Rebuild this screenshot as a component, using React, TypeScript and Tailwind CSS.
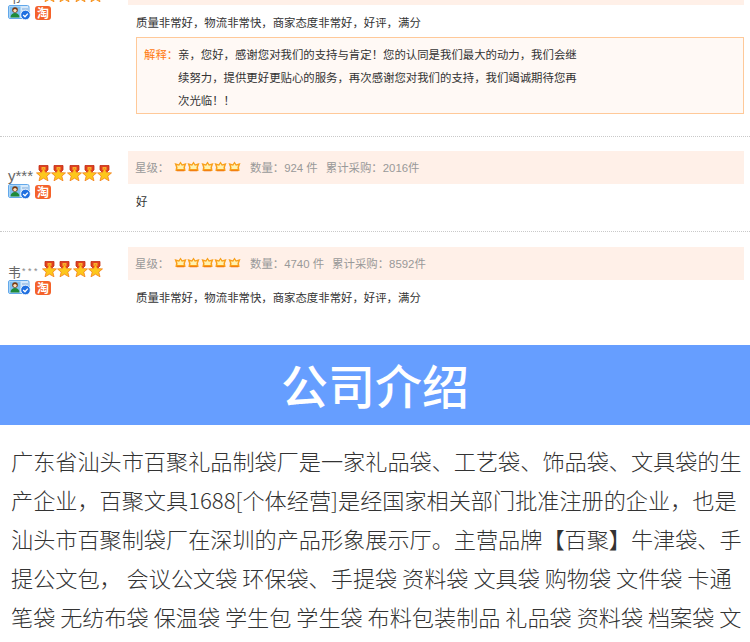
const cjk = "font-['Liberation_Sans','Noto_Sans_CJK_SC',sans-serif]";

function Medal() {
  return (
    <svg width="15" height="16" viewBox="0 0 15 16" className="shrink-0">
      <path d="M3 0.500h9v4.500l-2 2h-5l-2-2z" fill="#e0401f" stroke="#c22c12" strokeWidth="0.8" />
      <path d="M5.500 2h4v3h-4z" fill="#f7b02c" />
      <path
        d="M7.500 3.200l2 4.300 5 .4-3.700 3.200 1.200 4.700-4.500-2.600-4.500 2.600 1.200-4.700-3.700-3.200 5-.4z"
        fill="#fdc71c"
        stroke="#f4801a"
        strokeWidth="0.8"
        strokeLinejoin="round"
      />
    </svg>
  );
}

function Crown() {
  return (
    <svg width="13" height="11" viewBox="0 0 13 11" className="shrink-0">
      <path
        d="M6.500 .4l1.800 2.800 4.200-1.200-1.500 4.200.6 3.800h-10.200l.6-3.800-1.500-4.200 4.200 1.200z"
        fill="#f9a01b"
        strokeLinejoin="round"
      />
      <path d="M6.500 2.800l1.300 2 2.400-.6-.8 2.300.3 1.500h-6.400l.3-1.500-.8-2.300 2.400.6z" fill="#fff2b0" />
      <path d="M3 9.200h7l.4 1h-7.800z" fill="#f0760f" />
    </svg>
  );
}

function IdCard() {
  return (
    <svg width="23" height="15" viewBox="0 0 23 15" className="shrink-0">
      <rect x="0.500" y="0.500" width="20.500" height="13" rx="1.500" fill="#d5e9fb" stroke="#62a8ea" />
      <rect x="1.500" y="1.500" width="11" height="11" fill="#7fc0f2" />
      <circle cx="7" cy="5" r="2.800" fill="#7a3a12" />
      <circle cx="7" cy="5.600" r="1.700" fill="#fde0b8" />
      <path d="M2.500 12.500c0-3 2.200-4.500 4.500-4.500s4.500 1.500 4.500 4.500z" fill="#1f8a3a" />
      <path d="M14 4h6M14 6.500h5" stroke="#7fa9d8" />
      <circle cx="17.500" cy="10" r="4.800" fill="#1f6fe0" stroke="#fff" strokeWidth="0.800" />
      <path d="M15.200 10l1.800 1.800 2.800-3.200" fill="none" stroke="#fff" strokeWidth="1.300" />
    </svg>
  );
}

function TaoBadge() {
  return (
    <span className="ml-[4px] flex h-[14px] w-[16px] items-center justify-center rounded-[3px] bg-[#f4622a] font-['Noto_Sans_CJK_SC',sans-serif] text-[12px] leading-none font-bold text-white">
      淘
    </span>
  );
}

function UserRow({
  name,
  medals,
  count,
  total,
  totalGap,
  body,
  last,
  children,
  top,
}: {
  name: React.ReactNode;
  medals: number;
  count: string;
  total: string;
  totalGap: string;
  body: string;
  last?: boolean;
  children?: React.ReactNode;
  top: string;
}) {
  return (
    <div className={`flex pr-[6px] ${top} ${last ? "" : "border-b border-dotted border-[#c9c9c9]"}`}>
      <div className="w-[128px] shrink-0 pt-[14px] pl-[8px]">
        <div className="flex h-[16px] items-end">
          {name}
          <div className="flex gap-[0.3px]">
            {Array.from({ length: medals }).map((_, i) => (
              <Medal key={i} />
            ))}
          </div>
        </div>
        <div className="mt-[3px] flex items-center">
          <IdCard />
          <TaoBadge />
        </div>
      </div>
      <div className={`min-w-0 flex-1 ${cjk} text-[11.4px] text-[#333]`}>
        <div className="flex h-[33px] items-center bg-[#fff0e8] pt-[2px] pl-[7px] text-[#999]">
          <span className="w-[39px]">星级：</span>
          <span className="-mt-[5px] flex w-[76px] gap-[0.4px]">
            {Array.from({ length: 5 }).map((_, i) => (
              <Crown key={i} />
            ))}
          </span>
          <span>数量：{count} 件</span>
          <span className={totalGap}>累计采购：{total}件</span>
        </div>
        <p className="h-[32px] pl-[8px] leading-[37px]">{body}</p>
        {children}
      </div>
    </div>
  );
}

const intro = [
  "广东省汕头市百聚礼品制袋厂是一家礼品袋、工艺袋、饰品袋、文具袋的生",
  "产企业，百聚文具1688[个体经营]是经国家相关部门批准注册的企业，也是",
  "汕头市百聚制袋厂在深圳的产品形象展示厅。主营品牌【百聚】牛津袋、手",
  "提公文包， 会议公文袋 环保袋、手提袋 资料袋 文具袋 购物袋 文件袋 卡通",
  "笔袋 无纺布袋 保温袋 学生包 学生袋 布料包装制品 礼品袋 资料袋 档案袋 文",
];

const goodReview = "质量非常好，物流非常快，商家态度非常好，好评，满分";

function MaskedName() {
  return (
    <span className="-mb-[3px] w-[34px] shrink-0 text-[13px] leading-[14px] whitespace-nowrap text-[#666]">
      韦<span className="ml-[1px] align-[3px] text-[9px] tracking-[2.500px] text-[#888]">***</span>
    </span>
  );
}

export default function App() {
  return (
    <div className={`h-[642px] w-[750px] overflow-hidden bg-white ${cjk}`}>
      <UserRow
        top="-mt-[28px] pt-0"
        name={<MaskedName />}
        medals={4}
        count="4740"
        total="8592"
        totalGap="ml-[8px]"
        body={goodReview}
      >
        <div className="mb-[22px] ml-[8px] flex h-[77px] border border-[#ffc999] bg-[#fff9f5] pt-[6px] pl-[7px]">
          <span className="w-[34px] shrink-0 leading-[23px] whitespace-nowrap text-[#ff7a10]">解释：</span>
          <p className="w-[404px] leading-[23px]">
            亲，您好，感谢您对我们的支持与肯定！您的认同是我们最大的动力，我们会继续努力，提供更好更贴心的服务，再次感谢您对我们的支持，我们竭诚期待您再次光临！！
          </p>
        </div>
      </UserRow>
      <UserRow
        top="pt-[14px]"
        name={
          <span className="mr-[3px] -mb-[2px] font-['Liberation_Sans'] text-[15px] leading-[15px] text-[#666]">
            y***
          </span>
        }
        medals={5}
        count="924"
        total="2016"
        totalGap="ml-[8px]"
        body="好"
      >
        <div className="h-[15px]" />
      </UserRow>
      <UserRow
        top="pt-[15px]"
        last
        name={<MaskedName />}
        medals={4}
        count="4740"
        total="8592"
        totalGap="ml-[8px]"
        body={goodReview}
      >
        <div className="h-[33px]" />
      </UserRow>
      <div className="flex h-[80px] items-center justify-center bg-[#669eff] pb-[4px] font-['Noto_Sans_CJK_SC',sans-serif] text-[47px] leading-none font-medium text-white">
        公司介绍
      </div>
      <div className="pt-[16px] pl-[11px] font-['Noto_Sans_CJK_SC',sans-serif] text-[22.15px] leading-[39px] font-light text-[#333]">
        {intro.map((line) => (
          <div key={line} className="whitespace-pre">
            {line}
          </div>
        ))}
      </div>
    </div>
  );
}
